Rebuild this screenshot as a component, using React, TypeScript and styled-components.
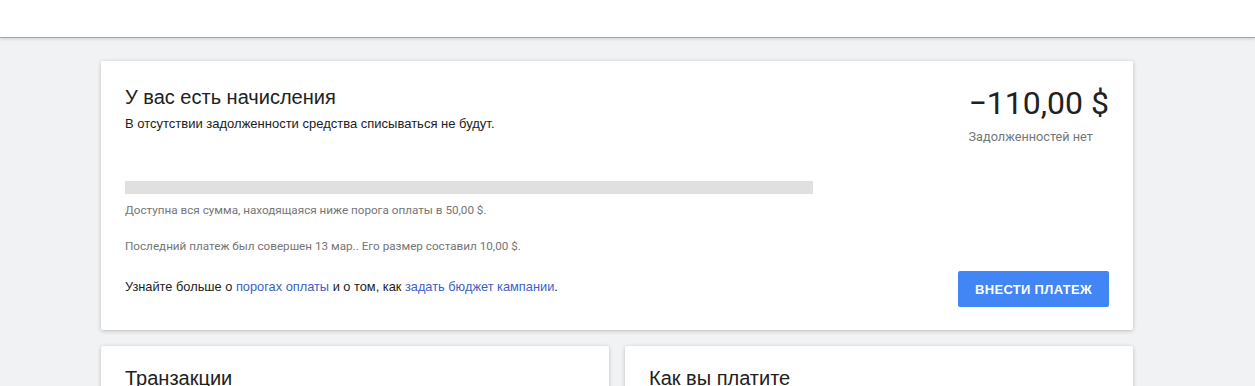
import React from 'react';
import styled, { createGlobalStyle } from 'styled-components';

const GlobalStyle = createGlobalStyle`
  body {
    margin: 0;
    background-color: #f1f2f4;
    font-family: 'Liberation Sans', Arial, sans-serif;
    color: #212121;
  }
`;

const Header = styled.header`
  height: 37px;
  background-color: #fff;
  border-bottom: 1px solid #a6a6a6;
  box-shadow: 0 1px 3px rgba(0, 0, 0, 0.15);
`;

const Page = styled.main`
  width: 1032px;
  margin: 23px 0 0 101px;
  display: flex;
  flex-direction: column;
  gap: 16px;
`;

const Card = styled.section`
  background-color: #fff;
  border-radius: 2px;
  box-shadow: 0 1px 4px rgba(0, 0, 0, 0.22);
  padding: 24px 24px 23px;
`;

const TopRow = styled.div`
  display: flex;
  justify-content: space-between;
  align-items: flex-start;
`;

const Title = styled.h2`
  margin: 0;
  font-size: 20px;
  line-height: 24px;
  font-weight: 400;
  color: #212121;
`;

const Lead = styled.p`
  margin: 7px 0 0;
  font-size: 13px;
  line-height: 16px;
`;

const Balance = styled.div`
  display: flex;
  flex-direction: column;
  align-items: flex-start;
`;

const Amount = styled.div`
  font-family: Roboto, 'Liberation Sans', sans-serif;
  font-size: 32px;
  line-height: 36px;
  color: #212121;
`;

const Hint = styled.p<{ $top?: number; $size?: number }>`
  margin: ${(p) => p.$top ?? 0}px 0 0;
  font-family: Roboto, 'Liberation Sans', sans-serif;
  font-size: ${(p) => p.$size ?? 11.7}px;
  line-height: 16px;
  color: #757575;
`;

const Track = styled.div`
  width: 688px;
  height: 13px;
  margin-top: 36px;
  background-color: #e0e0e0;
`;

const FooterRow = styled.div`
  display: flex;
  justify-content: space-between;
  align-items: center;
  margin-top: 17px;
`;

const Learn = styled.p`
  margin: 0 0 4px;
  font-size: 12.8px;
  line-height: 16px;
`;

const Link = styled.a`
  color: #3b5fc7;
  text-decoration: none;
`;

const PayButton = styled.button`
  height: 36px;
  padding: 0 17px;
  border: none;
  border-radius: 2px;
  background-color: #4285f4;
  color: #fff;
  font-family: 'Liberation Sans', Arial, sans-serif;
  font-size: 13px;
  font-weight: 700;
  letter-spacing: 0.3px;
  text-transform: uppercase;
`;

const Columns = styled.div`
  display: grid;
  grid-template-columns: 1fr 1fr;
  gap: 16px;
`;

const SmallCard = styled(Card)`
  padding-top: 20px;
  min-height: 200px;
`;

export default function App() {
  return (
    <>
      <GlobalStyle />
      <Header />
      <Page>
        <Card>
          <TopRow>
            <div>
              <Title>У вас есть начисления</Title>
              <Lead>В отсутствии задолженности средства списываться не будут.</Lead>
            </div>
            <Balance>
              <Amount>−110,00 $</Amount>
              <Hint $top={8} $size={12.7}>Задолженностей нет</Hint>
            </Balance>
          </TopRow>
          <Track />
          <Hint $top={8}>Доступна вся сумма, находящаяся ниже порога оплаты в 50,00 $.</Hint>
          <Hint $top={20}>Последний платеж был совершен 13 мар.. Его размер составил 10,00 $.</Hint>
          <FooterRow>
            <Learn>
              Узнайте больше о <Link href="#">порогах оплаты</Link> и о том, как{' '}
              <Link href="#">задать бюджет кампании</Link>.
            </Learn>
            <PayButton>Внести платеж</PayButton>
          </FooterRow>
        </Card>
        <Columns>
          <SmallCard>
            <Title>Транзакции</Title>
          </SmallCard>
          <SmallCard>
            <Title>Как вы платите</Title>
          </SmallCard>
        </Columns>
      </Page>
    </>
  );
}
